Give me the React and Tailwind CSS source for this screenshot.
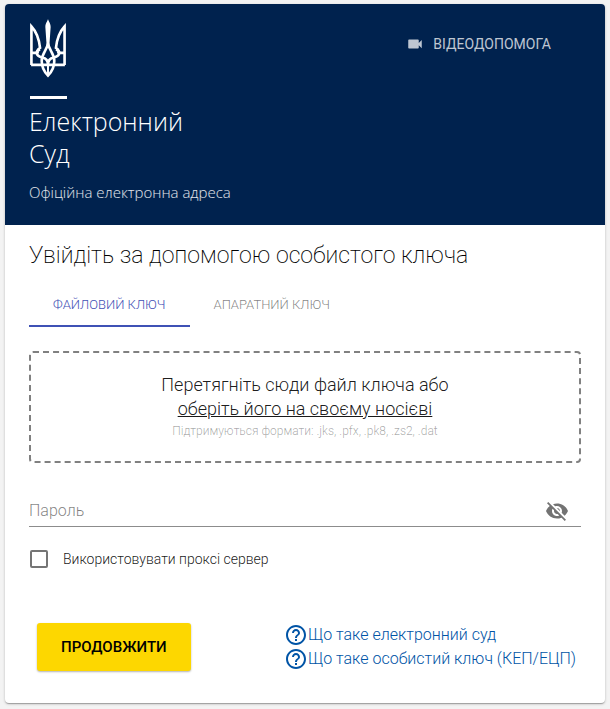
import { MdVideocam, MdVisibilityOff, MdHelpOutline } from "react-icons/md";

function Trident() {
  return (
    <svg viewBox="-3 0 111 178" className="h-[59px] w-[37px]" fill="none" stroke="#fff" strokeWidth="8" aria-hidden="true">
      <path d="M4 139V22C17 36 27 58 30 87C20 92 21 100 24 105" />
      <path d="M104 139V22C91 36 81 58 78 87C88 92 87 100 84 105" />
      <path d="M3 138.500H105M3 102H20M105 102H88" />
      <path d="M30 92C14 97 18 112 37 116C48 118 54 126 54 138C54 126 60 118 71 116C90 112 94 97 78 92" />
      <path d="M54 74C51 95 35 103 35 127C35 147 46 163 54 171C62 163 73 147 73 127C73 103 57 95 54 74Z" />
      <path d="M54 128V172" strokeWidth="6" />
      <path d="M54 0C56 8 62 12 62 24L58 82H50L46 24C46 12 52 8 54 0Z" fill="#fff" stroke="none" />
    </svg>
  );
}

function HelpLink({ children }) {
  return (
    <a href="#help" className="flex h-6 items-center whitespace-nowrap text-base font-light text-[#0054a6]">
      <MdHelpOutline className="size-6 shrink-0" />
      {children}
    </a>
  );
}

export default function App() {
  return (
    <div className="bg-[#f3f3f3] px-[5px] pt-1 pb-1.5 font-['Roboto',sans-serif]">
      <main className="overflow-hidden rounded bg-white shadow-[0_1px_3px_rgba(0,0,0,0.2),0_1px_1px_rgba(0,0,0,0.14),0_2px_1px_-1px_rgba(0,0,0,0.12)]">
        <header className="flex items-start justify-between bg-[#00224e] px-6 pt-[15px] pb-[23px] text-white">
          <div>
            <Trident />
            <div className="mt-[18px] ml-px h-[3px] w-[37px] bg-white" />
            <div className="mt-[6px] font-['Open_Sans',sans-serif] text-[25px]/8 font-light">
              Електронний
              <br />
              Суд
            </div>
            <p className="mt-[13px] font-['Open_Sans',sans-serif] text-[15px]/5 font-light text-white/90">
              Офіційна електронна адреса
            </p>
          </div>
          <a href="#video" className="mt-[15px] mr-[30px] flex items-center gap-[9px] text-sm/5 text-white/75">
            <MdVideocam className="size-[18px]" />
            ВІДЕОДОПОМОГА
          </a>
        </header>

        <form className="px-6 pb-8" onSubmit={(e) => e.preventDefault()}>
          <h1 className="pt-[17px] text-[23px]/7 font-extralight text-black">Увійдіть за допомогою особистого ключа</h1>

          <div role="tablist" className="mt-[11px] flex h-[46px]">
            <button type="button" role="tab" aria-selected="true" className="border-b-2 border-[#3f51b5] px-6 pt-1 text-[13px] font-light text-[#3f51b5]">
              ФАЙЛОВИЙ КЛЮЧ
            </button>
            <button type="button" role="tab" aria-selected="false" className="border-b-2 border-transparent px-6 pt-1 text-[13px] font-light text-black/50">
              АПАРАТНИЙ КЛЮЧ
            </button>
          </div>

          <div className="mt-6 flex h-28 flex-col items-center justify-center rounded border-2 border-dashed border-[#808080] text-center font-light">
            <p className="text-lg/6 text-black/90">
              Перетягніть сюди файл ключа або
              <br />
              <button type="button" className="underline">оберіть його на своєму носієві</button>
            </p>
            <p className="text-xs/5 text-black/35">Підтримуються формати: .jks, .pfx, .pk8, .zs2, .dat</p>
          </div>

          <div className="mt-8 flex h-8 items-center border-b border-[#8c8c8c] pr-3">
            <input
              type="password"
              aria-label="Пароль"
              placeholder="Пароль"
              className="min-w-0 flex-1 text-base font-light outline-none placeholder:text-black/50"
            />
            <button type="button" aria-label="Показати пароль" className="text-[#737373]">
              <MdVisibilityOff className="size-6" />
            </button>
          </div>

          <label className="mt-[22px] flex h-5 items-center gap-[15px] pl-px text-sm font-light text-black/90">
            <input type="checkbox" className="size-[18px] appearance-none rounded-xs border-2 border-[#757575] checked:bg-[#757575]" />
            Використовувати проксі сервер
          </label>

          <div className="mt-[54px] flex items-center justify-between pl-2 pr-[5px]">
            <button
              type="submit"
              className="h-12 rounded-[3px] bg-[#fdd700] px-6 text-[15px] font-medium text-black shadow-[0_1px_2px_rgba(0,0,0,0.3)]"
            >
              ПРОДОВЖИТИ
            </button>
            <div>
              <HelpLink>Що таке електронний суд</HelpLink>
              <HelpLink>Що таке особистий ключ (КЕП/ЕЦП)</HelpLink>
            </div>
          </div>
        </form>
      </main>
    </div>
  );
}
